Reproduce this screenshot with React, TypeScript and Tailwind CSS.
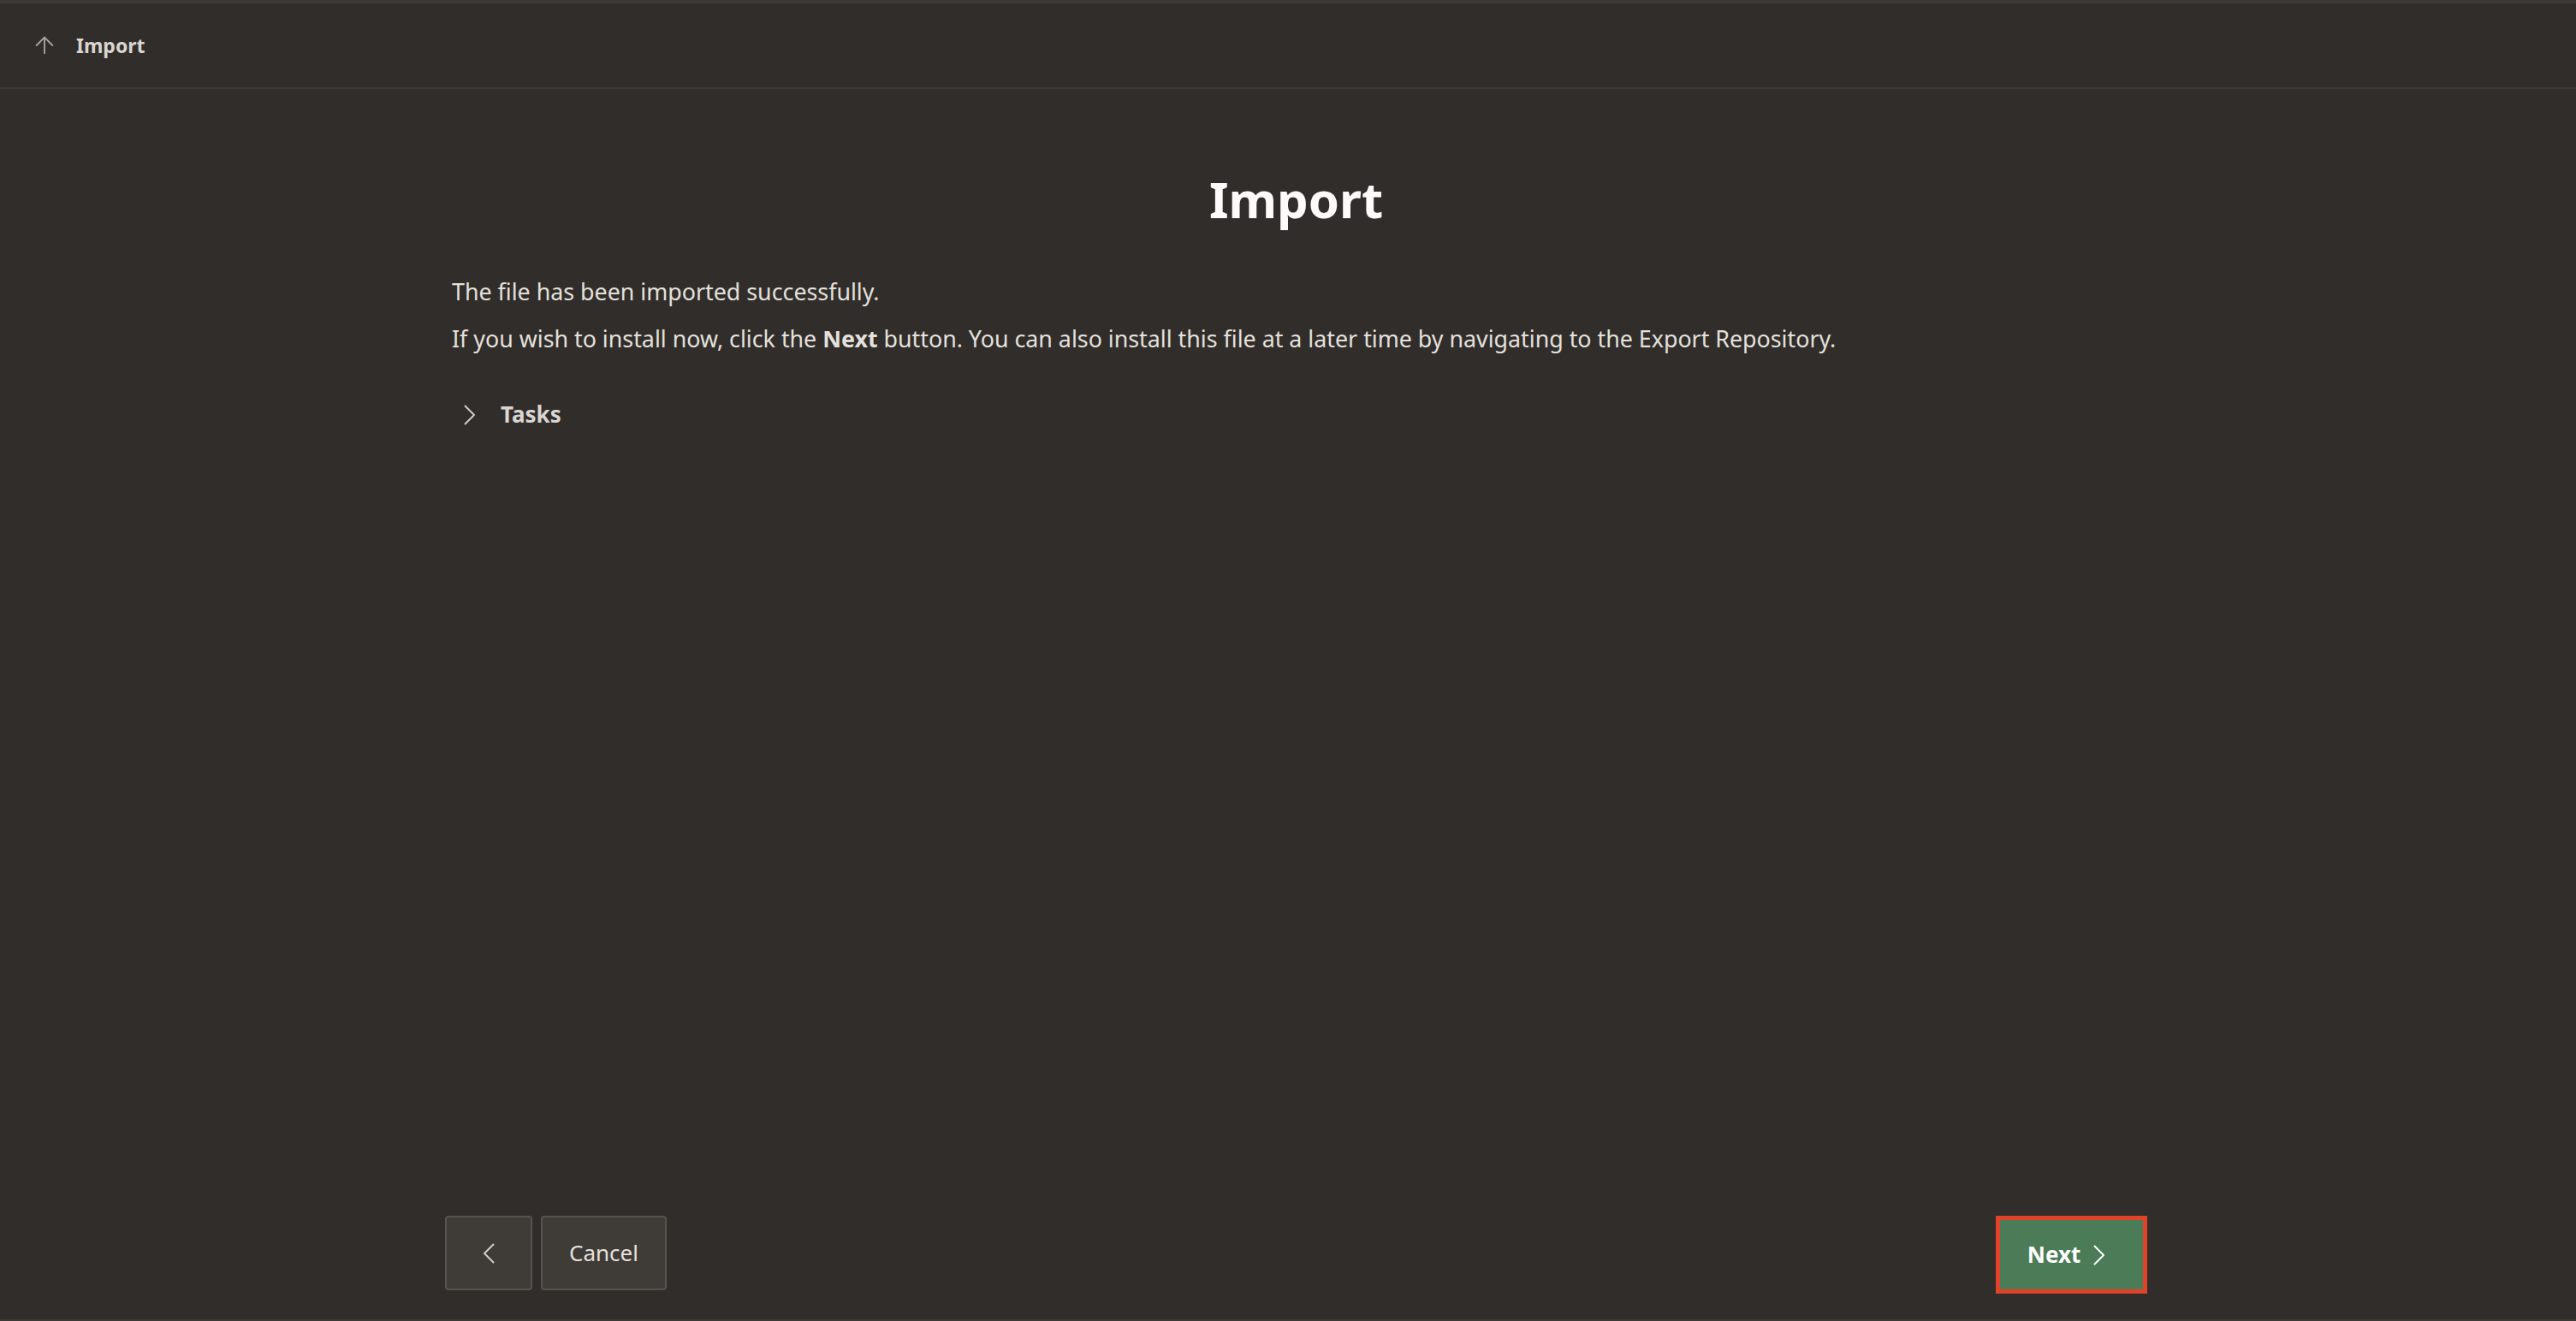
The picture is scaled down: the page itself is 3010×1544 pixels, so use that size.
import { ArrowUp } from 'lucide-react'

// thin tall chevron used by the Tasks toggle and the wizard buttons
function Chevron({ dir = 'right', className = '' }: { dir?: 'left' | 'right'; className?: string }) {
  const d = dir === 'right' ? 'M1.5 1.5 L12 12 L1.5 22.5' : 'M12.5 1.5 L2 12 L12.5 22.5'
  return (
    <svg width="14" height="24" viewBox="0 0 14 24" fill="none" className={className}>
      <path d={d} stroke="currentColor" strokeWidth="2" strokeLinecap="round" strokeLinejoin="round" />
    </svg>
  )
}

export default function App() {
  return (
    <div className="flex h-[1544px] w-full flex-col border-t-4 border-b-2 border-[#3d3935] bg-[#312d2a] font-['Noto_Sans',sans-serif] text-[#e4e1dd]">
      {/* top bar */}
      <header className="flex h-[100px] shrink-0 items-center gap-[21px] border-b-2 border-[#3d3935] pl-[36px]">
        <ArrowUp className="h-[32px] w-[32px] text-[#a9a5a0]" strokeWidth={1.4} />
        <span className="text-[23px] font-bold text-[#d9d6d2]">Import</span>
      </header>

      <main className="ml-[520px] flex w-[1989px] flex-1 flex-col">
        <h1 className="mt-[100px] text-center text-[58px] font-bold leading-none text-[#fcfbfa]">Import</h1>

        <div className="mt-[59px] px-2 text-[26.8px] leading-[39px]">
          <p>The file has been imported successfully.</p>
          <p className="mt-[16px]">
            If you wish to install now, click the <b className="font-bold">Next</b> button. You can also install this file at a
            later time by navigating to the Export Repository.
          </p>
        </div>

        <button className="mt-[50px] flex items-center gap-[29px] self-start pl-[22px] text-[26px] font-bold text-[#d9d6d2]">
          <Chevron className="text-[#d0ccc7]" />
          Tasks
        </button>

        <div className="flex-1" />

        {/* footer buttons */}
        <div className="flex items-start justify-between pb-[30px]">
          <div className="flex gap-[10px]">
            <button className="flex h-[87px] w-[102px] items-center justify-center rounded-[4px] border-2 border-[#57534f] bg-[#3f3b37]">
              <Chevron dir="left" className="text-[#d0ccc7]" />
            </button>
            <button className="flex h-[87px] w-[147px] items-center justify-center rounded-[4px] border-2 border-[#57534f] bg-[#3f3b37] text-[26px] text-[#e4e1dd]">
              Cancel
            </button>
          </div>
          <button className="flex h-[91px] w-[177px] items-center justify-center gap-[15px] border-[5px] border-[#e0432a] bg-[#4b7b57] pr-[12px] text-[26px] font-bold text-white">
            Next
            <Chevron className="text-white" />
          </button>
        </div>
      </main>
    </div>
  )
}
